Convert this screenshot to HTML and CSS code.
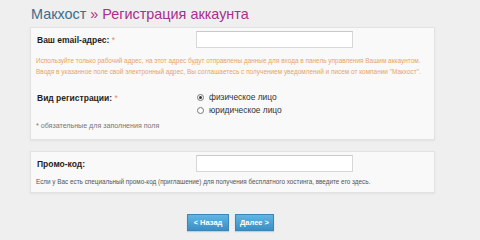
FILE: index.html
```html
<!DOCTYPE html>
<html lang="ru">
<head>
<meta charset="utf-8">
<link rel="stylesheet" href="styles.css">
</head>
<body>
<div class="page">
  <h1 class="title"><span class="brand">Макхост</span> <span class="crumb">» Регистрация аккаунта</span></h1>

  <div class="panel panel-main">
    <div class="row row-email">
      <div class="label">Ваш email-адрес: <span class="req">*</span></div>
      <div class="field"><input class="input" type="text"></div>
    </div>
    <div class="note">
      <p>Используйте только рабочий адрес, на этот адрес будут отправлены данные для входа в панель управления Вашим аккаунтом.</p>
      <p>Вводя в указанное поле свой электронный адрес, Вы соглашаетесь с получением уведомлений и писем от компании "Макхост".</p>
    </div>
    <div class="row row-type">
      <div class="label">Вид регистрации: <span class="req">*</span></div>
      <div class="field radios">
        <label class="radio"><span class="dot checked"></span>физическое лицо</label>
        <label class="radio"><span class="dot"></span>юридическое лицо</label>
      </div>
    </div>
    <div class="required-note">* обязательные для заполнения поля</div>
  </div>

  <div class="panel panel-promo">
    <div class="row row-promo">
      <div class="label">Промо-код:</div>
      <div class="field"><input class="input" type="text"></div>
    </div>
    <div class="help">Если у Вас есть специальный промо-код (приглашение) для получения бесплатного хостинга, введите его здесь.</div>
  </div>

  <div class="actions">
    <button class="btn btn-back">&lt; Назад</button>
    <button class="btn btn-next">Далее &gt;</button>
  </div>
</div>
</body>
</html>
```
FILE: styles.css
```css
* { box-sizing: border-box; }
html, body { margin: 0; padding: 0; }
body {
  background: #efefef;
  font-family: "Liberation Sans", Arial, sans-serif;
  color: #222;
  width: 480px;
  height: 238px;
  overflow: hidden;
}
.page {
  padding: 5px 0 0 30px;
  width: 435px;
}
.title {
  margin: 0 0 4px 1px;
  font-size: 14.4px;
  font-weight: normal;
  line-height: 18px;
}
.brand { color: #3b6d8e; }
.crumb { color: #a8308a; }

.panel {
  width: 405px;
  background: #f9f9f9;
  border: 1px solid #e2e2e2;
  box-shadow: 0 1px 2px rgba(0,0,0,0.06);
  padding: 0 5px;
}
.panel-main { height: 113px; padding-top: 3px; }
.panel-promo { margin-top: 11px; height: 42px; padding-top: 3px; }

.row { display: flex; align-items: flex-start; }
.label {
  width: 160px;
  font-size: 8.5px;
  font-weight: bold;
  color: #1e1e1e;
  padding-top: 4px;
  padding-left: 1px;
}
.req { color: #e9866a; font-weight: normal; }
.input {
  display: block;
  width: 157px;
  height: 17px;
  margin: 0;
  border: 1px solid #d8d8d8;
  border-top-color: #c8c8c8;
  background: #fff;
  padding: 0;
}
.note {
  margin-top: 7px;
  color: #e8a466;
  font-size: 6.45px;
  line-height: 11px;
  white-space: nowrap;
}
.note p { margin: 0; }
.row-type { margin-top: 15px; }
.row-type .label { padding-top: 1px; }
.radios { display: flex; flex-direction: column; gap: 2px; padding-left: 1px; }
.radio {
  display: flex;
  align-items: center;
  font-size: 8.4px;
  color: #333;
  line-height: 11px;
}
.dot {
  width: 7px;
  height: 7px;
  border: 1px solid #777;
  border-radius: 50%;
  margin-right: 5px;
  background: #fff;
  position: relative;
}
.dot.checked::after {
  content: "";
  position: absolute;
  left: 1px;
  top: 1px;
  width: 3px;
  height: 3px;
  border-radius: 50%;
  background: #333;
}
.required-note {
  margin-top: 6px;
  font-size: 7.1px;
  color: #777;
}
.row-promo .label { padding-top: 4px; }
.help {
  margin-top: 6px;
  font-size: 6.35px;
  color: #555;
  white-space: nowrap;
}
.actions {
  display: flex;
  gap: 6px;
  padding-left: 157px;
  margin-top: 21px;
}
.btn {
  height: 17px;
  padding: 0;
  border: 1px solid #3d86b8;
  background: linear-gradient(#5fb6e3, #3a8fc6);
  color: #fff;
  font-family: "Liberation Sans", Arial, sans-serif;
  font-weight: bold;
  font-size: 7.5px;
  white-space: nowrap;
  text-align: center;
  box-shadow: 0 1px 1px rgba(0,0,0,0.15);
}
.btn-back { width: 42px; }
.btn-next { width: 39px; }
```
